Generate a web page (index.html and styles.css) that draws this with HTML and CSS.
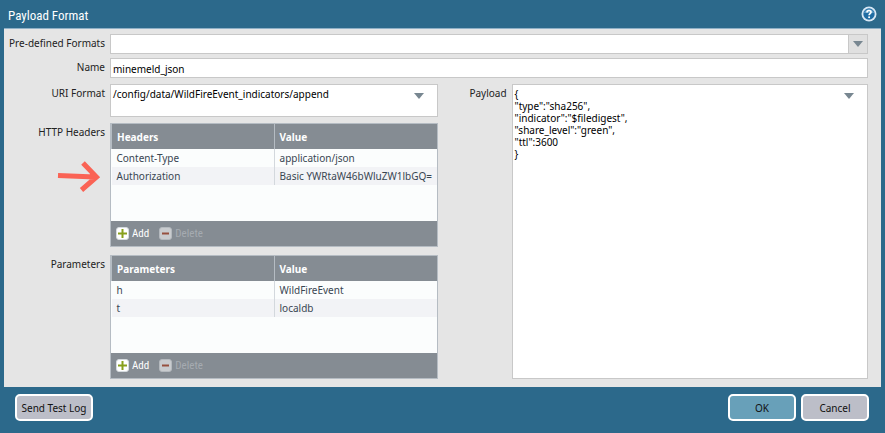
FILE: index.html
```html
<!DOCTYPE html>
<html lang="en">
<head>
    <meta charset="UTF-8">
    <meta name="viewport" content="width=device-width, initial-scale=1.0">
    <title>Payload Format</title>
    <link rel="stylesheet" href="styles.css">
</head>
<body>

    <header class="titlebar">
        <h1>Payload Format</h1>
        <button type="button" class="help" aria-label="Help">
            <svg width="16" height="16" viewBox="0 0 16 16">
                <circle cx="8" cy="8" r="7.5" fill="#d9e8f5"/>
                <circle cx="8" cy="8" r="5.7" fill="#1f6ca3"/>
                <path d="M3 7a5.2 5.2 0 0 1 10 0z" fill="#5c9bc6"/>
                <path d="M6 6.4C6 3.9 10 3.9 10 6.2C10 7.7 8.1 7.6 8.1 9.2" fill="none" stroke="#fff" stroke-width="1.7"/>
                <circle cx="8.1" cy="11.3" r="1" fill="#fff"/>
            </svg>
        </button>
    </header>

    <form class="panel" id="payload-form">
        <label class="label" for="predefined">Pre-defined Formats</label>
        <div class="field wide combo">
            <select id="predefined"><option value=""></option></select>
            <span class="trigger"><span class="caret"></span></span>
        </div>

        <label class="label" for="name">Name</label>
        <input class="field wide" id="name" type="text" value="minemeld_json">

        <label class="label row-uri" for="uri">URI Format</label>
        <div class="area uri row-uri">
            <textarea class="field" id="uri" spellcheck="false">/config/data/WildFireEvent_indicators/append</textarea>
            <button type="button" class="toggle" aria-label="Insert URI variable"><span class="caret"></span></button>
        </div>

        <div class="label row-headers" id="headers-label">
            HTTP Headers
            <svg class="arrow" width="44" height="34" viewBox="0 0 44 34">
                <path d="M1 16.5L38 18M26 4L39.5 18L24.5 31" fill="none" stroke="#fa6355" stroke-width="5"/>
            </svg>
        </div>
        <div class="grid row-headers">
            <table aria-labelledby="headers-label">
                <thead>
                    <tr><th>Headers</th><th>Value</th></tr>
                </thead>
                <tbody>
                    <tr><td>Content-Type</td><td>application/json</td></tr>
                    <tr><td>Authorization</td><td>Basic YWRtaW46bWluZW1lbGQ=</td></tr>
                </tbody>
            </table>
            <div class="toolbar">
                <button type="button">
                    <svg width="13" height="13" viewBox="0 0 13 13">
                        <rect x="0.5" y="0.5" width="12" height="12" rx="2.5" fill="#fff" stroke="#d5dbdf"/>
                        <path d="M2 6.5H11M6.5 2V11" stroke="#88a01c" stroke-width="2"/>
                    </svg>
                    Add
                </button>
                <button type="button" disabled>
                    <svg width="13" height="13" viewBox="0 0 13 13">
                        <rect x="0.5" y="0.5" width="12" height="12" rx="2.5" fill="#c9cccf" stroke="#b4b9be"/>
                        <path d="M3 6.5H10" stroke="#96503f" stroke-width="2"/>
                    </svg>
                    Delete
                </button>
            </div>
        </div>

        <div class="label row-params" id="params-label">Parameters</div>
        <div class="grid row-params">
            <table aria-labelledby="params-label">
                <thead>
                    <tr><th>Parameters</th><th>Value</th></tr>
                </thead>
                <tbody>
                    <tr><td>h</td><td>WildFireEvent</td></tr>
                    <tr><td>t</td><td>localdb</td></tr>
                </tbody>
            </table>
            <div class="toolbar">
                <button type="button">
                    <svg width="13" height="13" viewBox="0 0 13 13">
                        <rect x="0.5" y="0.5" width="12" height="12" rx="2.5" fill="#fff" stroke="#d5dbdf"/>
                        <path d="M2 6.5H11M6.5 2V11" stroke="#88a01c" stroke-width="2"/>
                    </svg>
                    Add
                </button>
                <button type="button" disabled>
                    <svg width="13" height="13" viewBox="0 0 13 13">
                        <rect x="0.5" y="0.5" width="12" height="12" rx="2.5" fill="#c9cccf" stroke="#b4b9be"/>
                        <path d="M3 6.5H10" stroke="#96503f" stroke-width="2"/>
                    </svg>
                    Delete
                </button>
            </div>
        </div>

        <label class="label payload-label" for="payload">Payload</label>
        <div class="area payload">
            <textarea class="field" id="payload" spellcheck="false">{
"type":"sha256",
"indicator":"$filedigest",
"share_level":"green",
"ttl":3600
}</textarea>
            <button type="button" class="toggle" aria-label="Insert payload variable"><span class="caret"></span></button>
        </div>
    </form>

    <footer class="actions">
        <button type="button" class="btn test">Send Test Log</button>
        <button type="submit" form="payload-form" class="btn ok">OK</button>
        <button type="button" class="btn cancel">Cancel</button>
    </footer>

</body>
</html>
```

FILE: styles.css
```css
* {
    box-sizing: border-box;
}
body {
    display: flex;
    flex-direction: column;
    min-height: 100vh;
    margin: 0;
    padding: 0 4px;
    background-color: #2c698b;
    color: #222;
    font-family: "Noto Sans", Tahoma, sans-serif;
    font-size: 10px;
    line-height: 12px;
}
button, input, select, textarea {
    font: inherit;
    margin: 0;
}

/* Title bar */
.titlebar {
    display: flex;
    align-items: center;
    justify-content: space-between;
    height: 28px;
    padding: 0 4px;
}
h1 {
    margin: 0;
    padding-top: 4px;
    color: #fff;
    font-family: "Roboto Condensed", "Open Sans Condensed", Roboto, sans-serif;
    font-size: 13px;
    font-weight: normal;
    line-height: 18px;
}
.help {
    padding: 0;
    border: none;
    background: none;
}
.help svg {
    display: block;
}

/* Form */
.panel {
    flex: 1;
    display: grid;
    grid-template-columns: 101px 329fr 64px 358fr;
    grid-template-rows: 24px 26px 39px 132px 124px;
    column-gap: 5px;
    align-content: start;
    align-items: start;
    padding: 5px 13px 7px 0;
    border-top: 1px solid #8fb0c6;
    background-color: #e5e5e5;
}
.label {
    position: relative;
    padding-top: 3px;
    text-align: right;
    white-space: nowrap;
}
.field {
    width: 100%;
    border: 1px solid #c8c8c8;
    border-radius: 0;
    background-color: #fff;
    color: #000;
    outline: none;
}
.wide {
    grid-column: 2 / -1;
    height: 20px;
}
input.field {
    padding: 1px 2px 0;
}
.combo {
    display: flex;
}
.combo select {
    flex: 1;
    border: none;
    background: none;
    appearance: none;
    outline: none;
}
.trigger {
    display: flex;
    align-items: center;
    justify-content: center;
    width: 19px;
    border-left: 1px solid #c8c8c8;
    background-color: #e0e0e0;
}
.caret {
    display: block;
    border: 5px solid transparent;
    border-top: 6px solid #788791;
    border-bottom: none;
}
.area {
    position: relative;
}
.area textarea {
    display: block;
    height: 100%;
    padding: 3px 2px;
    resize: none;
    overflow: hidden;
}
.toggle {
    position: absolute;
    top: 9px;
    right: 14px;
    padding: 0;
    border: none;
    background: none;
}
.uri {
    height: 33px;
}
.row-uri {
    grid-row: 3;
}
.row-headers {
    grid-row: 4;
}
.row-params {
    grid-row: 5;
}
.payload-label {
    grid-area: 3 / 3;
}
.payload {
    grid-area: 3 / 4 / 6 / 5;
    height: 100%;
}

/* Tables */
.grid {
    display: flex;
    flex-direction: column;
    height: 124px;
    border: 1px solid #b5bcc3;
    background-color: #fbfdfd;
}
table {
    width: 100%;
    table-layout: fixed;
    border-collapse: collapse;
}
th, td {
    padding: 0 5px;
    text-align: left;
    white-space: nowrap;
}
th {
    height: 25px;
    background-color: #858c93;
    border-left: 1px solid #b5bcc3;
    color: #fff;
}
td {
    height: 18px;
    color: #394652;
}
td + td {
    border-left: 1px solid #d3d8dd;
}
tbody tr:nth-child(even) {
    background-color: #f2f3f6;
}
.toolbar {
    display: flex;
    align-items: center;
    gap: 10px;
    height: 25px;
    margin-top: auto;
    padding: 0 5px;
    background-color: #858c93;
}
.toolbar button {
    display: flex;
    align-items: center;
    gap: 3px;
    padding: 0;
    border: none;
    background: none;
    color: #fff;
    font-family: "Roboto Condensed", "Open Sans Condensed", Roboto, sans-serif;
    font-size: 11px;
}
.toolbar button:disabled {
    color: #a5abb1;
}
.arrow {
    position: absolute;
    top: 36px;
    right: 4px;
}

/* Footer buttons */
.actions {
    display: flex;
    align-items: flex-start;
    gap: 5px;
    height: 46px;
    padding: 7px 12px 0 11px;
}
.btn {
    width: 68px;
    height: 27px;
    padding: 0;
    border: 2px solid #fff;
    border-radius: 5px;
    background-color: #bcbec8;
    color: #111;
}
.test {
    width: 78px;
    margin-right: auto;
}
.ok {
    background-color: #68a0b9;
}
```
